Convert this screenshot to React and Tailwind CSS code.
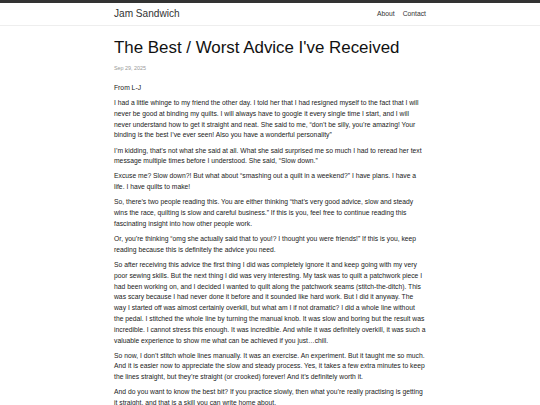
import React from "react";

const paragraphs = [
  "I had a little whinge to my friend the other day. I told her that I had resigned myself to the fact that I will never be good at binding my quilts. I will always have to google it every single time I start, and I will never understand how to get it straight and neat. She said to me, “don’t be silly, you’re amazing! Your binding is the best I’ve ever seen! Also you have a wonderful personality”",
  "I’m kidding, that’s not what she said at all. What she said surprised me so much I had to reread her text message multiple times before I understood. She said, “Slow down.”",
  "Excuse me? Slow down?! But what about “smashing out a quilt in a weekend?” I have plans. I have a life. I have quilts to make!",
  "So, there’s two people reading this. You are either thinking “that’s very good advice, slow and steady wins the race, quilting is slow and careful business.” If this is you, feel free to continue reading this fascinating insight into how other people work.",
  "Or, you’re thinking “omg she actually said that to you!? I thought you were friends!” If this is you, keep reading because this is definitely the advice you need.",
  "So after receiving this advice the first thing I did was completely ignore it and keep going with my very poor sewing skills. But the next thing I did was very interesting. My task was to quilt a patchwork piece I had been working on, and I decided I wanted to quilt along the patchwork seams (stitch-the-ditch). This was scary because I had never done it before and it sounded like hard work. But I did it anyway. The way I started off was almost certainly overkill, but what am I if not dramatic? I did a whole line without the pedal. I stitched the whole line by turning the manual knob. It was slow and boring but the result was incredible. I cannot stress this enough. It was incredible. And while it was definitely overkill, it was such a valuable experience to show me what can be achieved if you just…chill.",
  "So now, I don’t stitch whole lines manually. It was an exercise. An experiment. But it taught me so much. And it is easier now to appreciate the slow and steady process. Yes, it takes a few extra minutes to keep the lines straight, but they’re straight (or crooked) forever! And it’s definitely worth it.",
  "And do you want to know the best bit? If you practice slowly, then what you’re really practising is getting it straight, and that is a skill you can write home about.",
];

function Header() {
  return (
    <header className="border-b border-[#eeeeee] bg-white">
      <div className="mx-auto flex h-[22px] w-[312px] items-center justify-between">
        <a className="text-[10.1px] text-[#333]">Jam Sandwich</a>
        <nav className="flex gap-[8px] text-[6.75px] text-[#333]">
          <a>About</a>
          <a>Contact</a>
        </nav>
      </div>
    </header>
  );
}

export default function App() {
  return (
    <div className="min-h-screen bg-white font-['Liberation_Sans',Arial,sans-serif]">
      <div className="h-[3px] bg-[#333]" />
      <Header />
      <main className="mx-auto w-[312px] pt-[12px]">
        <h1 className="text-[16.9px] leading-[20px] text-[#111]">
          The Best / Worst Advice I've Received
        </h1>
        <p className="mt-[6px] text-[5.4px] leading-[8px] text-[#999]">
          Sep 29, 2025
        </p>
        <div className="mt-[11px] space-y-[4.3px] text-[6.75px] leading-[10.8px] text-[#222]">
          <p>From L-J</p>
          {paragraphs.map((text, i) => (
            <p key={i}>{text}</p>
          ))}
        </div>
      </main>
    </div>
  );
}
